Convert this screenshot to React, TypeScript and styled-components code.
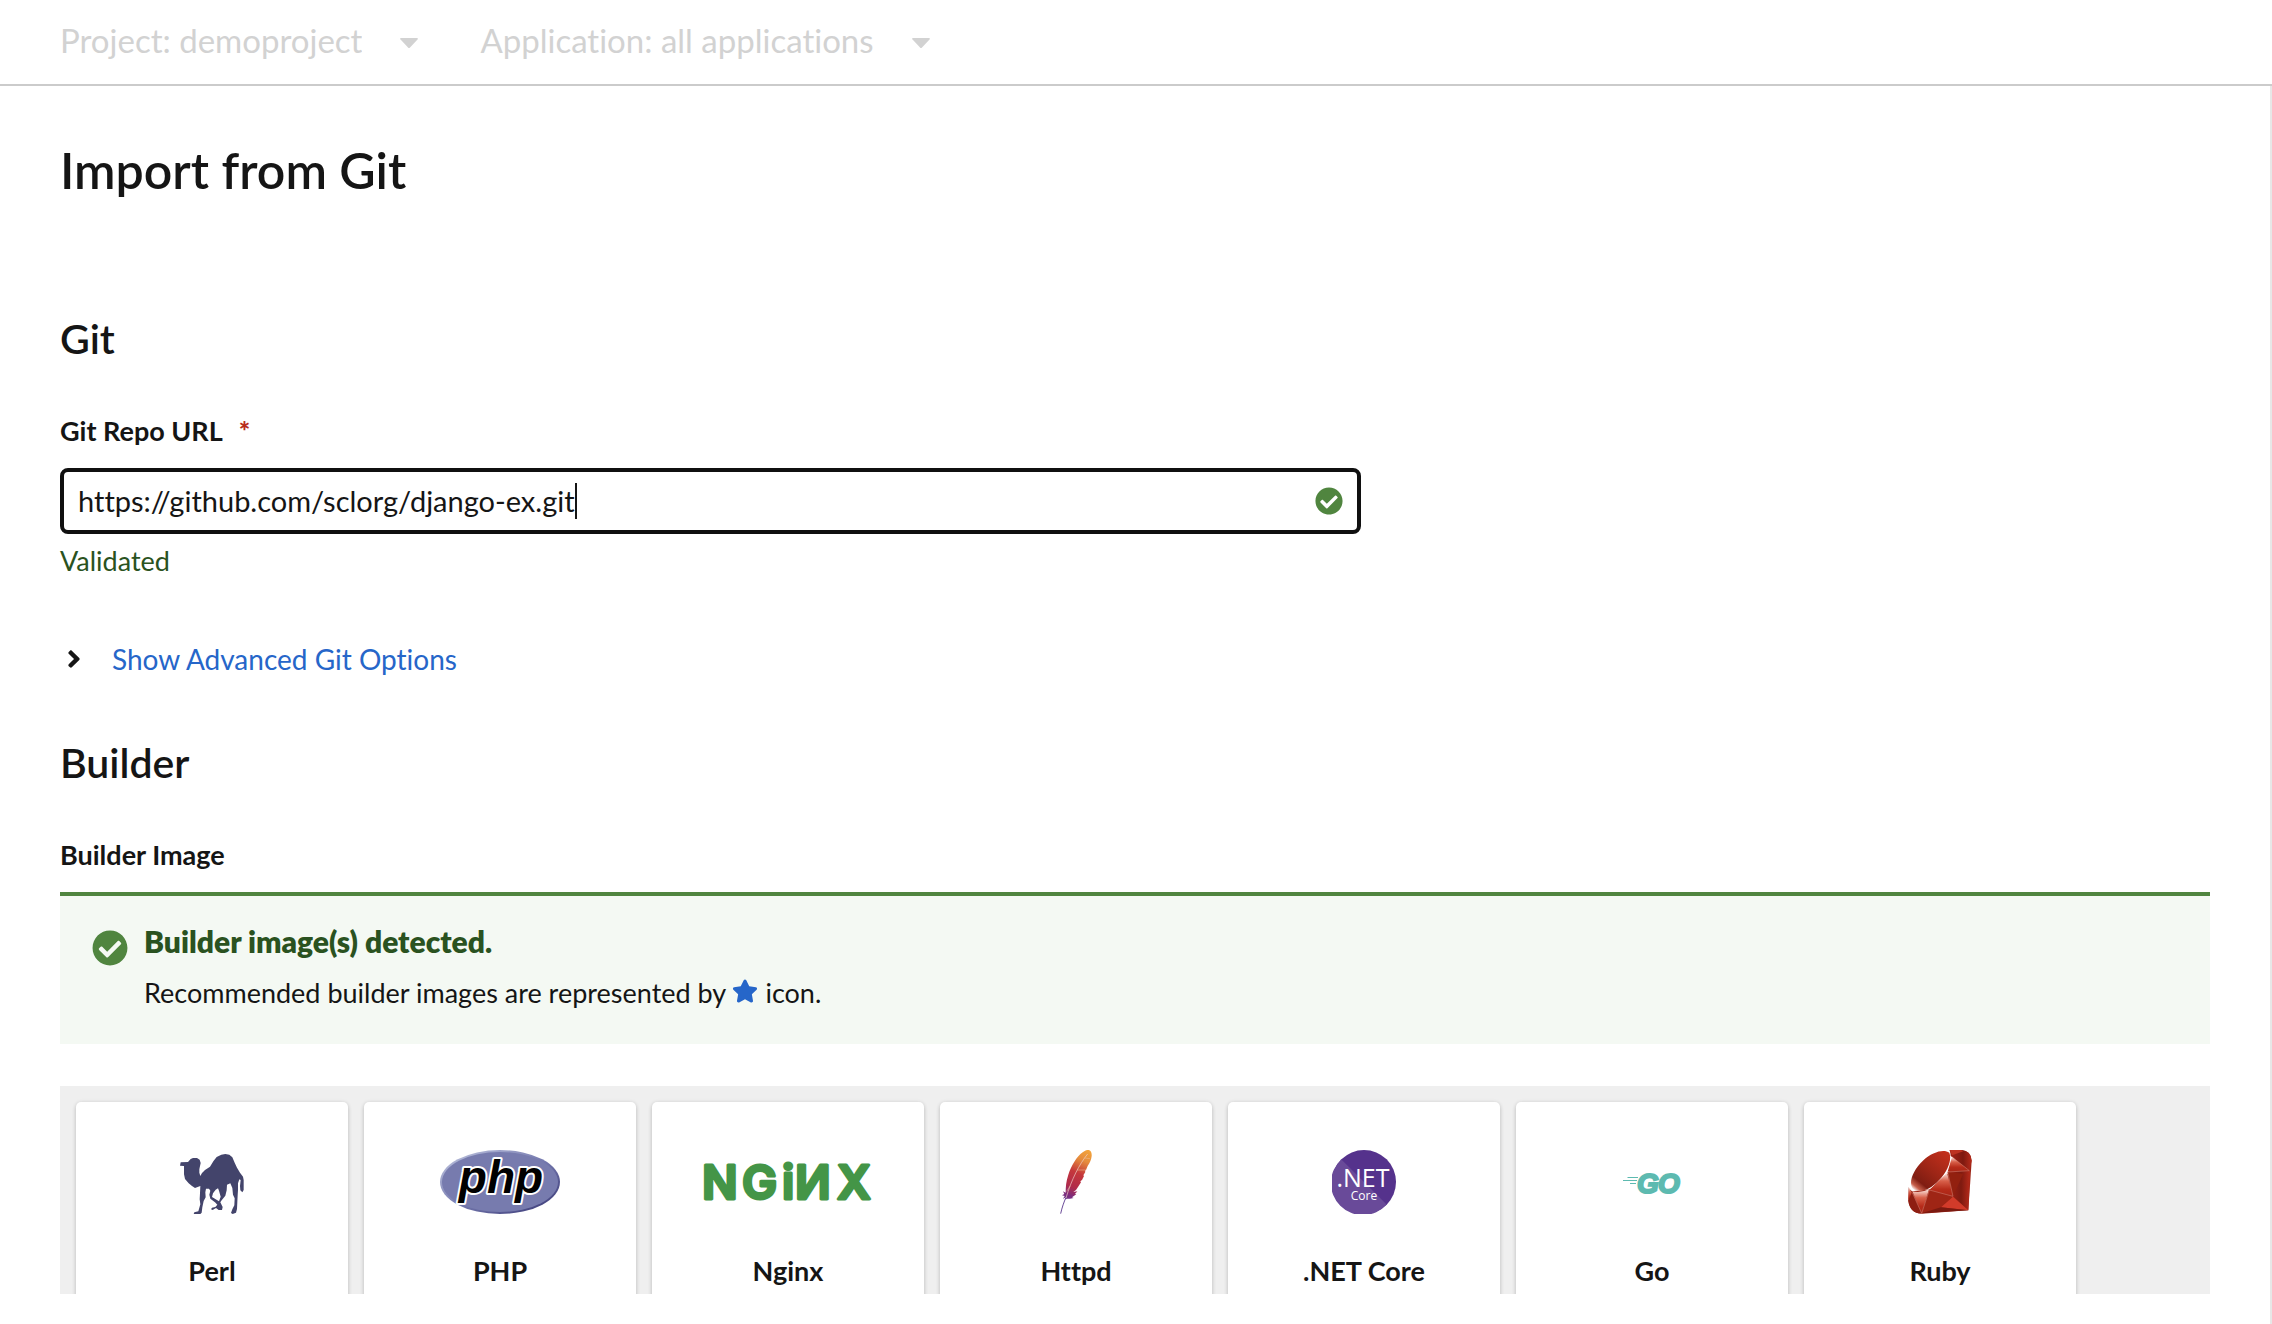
import React, { useState } from "react";
import styled, { createGlobalStyle, css } from "styled-components";
import { FaCheckCircle, FaAngleRight, FaStar } from "react-icons/fa";

const color = {
  text: "#151515",
  muted: "#d2d2d2",
  border: "#cbcbcb",
  success: "#50853f",
  successText: "#2a5220",
  successBg: "#f4f9f3",
  link: "#2666c9",
  danger: "#b92d1c",
  panel: "#efefef",
};

const GlobalStyle = createGlobalStyle`
  *, *::before, *::after { box-sizing: border-box; }
  body {
    margin: 0;
    background: #fff;
    color: ${color.text};
    font-family: Lato, "Open Sans", sans-serif;
    font-size: 28px;
    line-height: 36px;
  }
  body, button, input, select { font-variant-ligatures: none; }
`;

const Page = styled.div`
  display: flex;
  flex-direction: column;
  height: 100vh;
`;

const Toolbar = styled.header`
  display: flex;
  flex: none;
  align-items: center;
  gap: 62px;
  height: 86px;
  padding: 0 60px 4px;
  border-bottom: 2px solid ${color.border};
`;

const Dropdown = styled.label`
  display: flex;
  align-items: center;
  gap: 38px;
  color: ${color.muted};

  svg {
    width: 18px;
    height: 10px;
    margin-top: 6px;
  }
`;

const DropdownSelect = styled.select`
  appearance: none;
  field-sizing: content;
  padding: 0;
  border: 0;
  background: none;
  color: inherit;
  font: inherit;
  font-size: 33px;
  line-height: 40px;
  font-variant-ligatures: none;
  opacity: 1;
`;

const Content = styled.main`
  display: flex;
  flex: 1;
  flex-direction: column;
  min-height: 0;
  padding: 54px 60px 30px;
  border-right: 2px solid #e7e7e7;
  overflow: hidden;
`;

const Title = styled.h1`
  margin: 0 0 113px;
  font-size: 50px;
  font-weight: 600;
  line-height: 60px;
`;

const Section = styled.section<{ $fill?: boolean }>`
  display: flex;
  flex-direction: column;
  ${(p) =>
    p.$fill &&
    css`
      flex: 1;
      min-height: 0;
      margin-top: 58px;
    `}
`;

const SectionTitle = styled.h2`
  margin: 0 0 48px;
  font-size: 41px;
  font-weight: 600;
  line-height: 52px;
`;

const fieldLabel = css`
  margin: 0 0 19px;
  font-size: 27px;
  font-weight: 700;
  line-height: 36px;
`;

const FieldLabel = styled.label`
  ${fieldLabel}
`;

const GroupLabel = styled.h3`
  ${fieldLabel}
`;

const Required = styled.span`
  margin-left: 16px;
  color: ${color.danger};
  font-weight: 900;
`;

const InputBox = styled.div`
  display: flex;
  align-items: center;
  width: 60.5%;
  height: 66px;
  padding: 0 14px;
  border: 4px solid #101010;
  border-radius: 8px;

  svg {
    width: 28px;
    height: 28px;
    margin-left: auto;
    color: ${color.success};
  }
`;

const UrlInput = styled.input`
  field-sizing: content;
  max-width: 90%;
  padding: 0;
  border: 0;
  outline: 0;
  background: none;
  color: inherit;
  font: inherit;
  font-size: 29px;
  font-variant-ligatures: none;
`;

const TextCursor = styled.span`
  width: 2px;
  height: 36px;
  background: ${color.text};
`;

const HelperText = styled.p`
  margin: 9px 0 0;
  color: ${color.successText};
  font-size: 27px;
`;

const Expander = styled.button`
  display: flex;
  align-items: center;
  align-self: flex-start;
  gap: 28px;
  margin-top: 60px;
  padding: 0 0 0 4px;
  border: 0;
  background: none;
  color: ${color.link};
  font: inherit;
  font-variant-ligatures: none;
  line-height: 40px;
  cursor: pointer;

  svg {
    width: 20px;
    height: 28px;
    color: ${color.text};
  }
`;

const Alert = styled.div`
  display: flex;
  flex: none;
  gap: 16px;
  padding: 25px 32px 31px;
  border-top: 4px solid ${color.success};
  background: ${color.successBg};

  > svg {
    flex: none;
    width: 36px;
    height: 36px;
    margin-top: 9px;
    color: ${color.success};
  }
`;

const AlertBody = styled.div`
  display: flex;
  flex-direction: column;
  gap: 12px;
  line-height: 40px;
`;

const AlertTitle = styled.h4`
  margin: 0;
  color: ${color.successText};
  font-size: 30px;
  font-weight: 800;
`;

const AlertText = styled.p`
  margin: 0;
  font-size: 27px;

  svg {
    width: 26px;
    height: 24px;
    color: ${color.link};
  }
`;

const BuilderGrid = styled.div`
  display: grid;
  flex: 1;
  grid-template-columns: repeat(auto-fill, 272px);
  gap: 16px;
  min-height: 0;
  margin-top: 42px;
  padding: 16px;
  background: ${color.panel};
  overflow: hidden;
`;

const BuilderCard = styled.button`
  display: flex;
  flex-direction: column;
  align-items: center;
  gap: 39px;
  height: 240px;
  padding: 48px 16px;
  border: 0;
  border-radius: 5px;
  background: #fff;
  box-shadow: 0 2px 4px rgba(3, 3, 3, 0.16), 0 0 4px rgba(3, 3, 3, 0.08);
  color: inherit;
  font: inherit;
  font-size: 27px;
  font-weight: 700;
  font-variant-ligatures: none;
  cursor: pointer;
`;

function CaretIcon() {
  return (
    <svg viewBox="0 0 18 10" aria-hidden="true">
      <path fill="currentColor" d="M1 0H17Q18.500 0.300 17.500 1.500L10 9.500Q9 10.500 8 9.500L0.500 1.500Q-0.500 0.300 1 0Z" />
    </svg>
  );
}

function PerlIcon() {
  return (
    <svg width="64" height="64" viewBox="60 30 192 192" aria-hidden="true">
      <path
        fill="#43446b"
        fillRule="evenodd"
        d="M60 77 62 67 84 66 92 57 99 54 111 54 119 59 122 69 118 88 118 98 121 108 126 99 135 90 150 80 160 64 170 51 184 44 196 42 208 44 217 52 224 68 231 83 240 98 249 110 251 120 251 150 247 157 241 151 240 138 242 120 238 118 234 130 234 150 233 166 232 186 231 207 228 218 218 222 213 219 217 208 223 196 224 175 219 164 217 144 211 130 201 134 200 151 196 167 185 181 181 187 188 201 186 210 176 210 168 204 158 210 153 208 156 203 166 201 172 194 165 187 151 176 148 164 151 152 147 146 138 146 136 157 137 172 131 183 127 202 125 218 121 222 101 222 103 217 115 214 121 193 119 178 120 160 121 138 113 141 105 144 96 138 86 130 75 117 72 103 72 78ZM159 160 156 171 177 184 182 170 177 152 174 145 167 149Z"
      />
    </svg>
  );
}

function PhpIcon() {
  return (
    <svg width="120" height="64" viewBox="0 0 120 64" aria-hidden="true">
      <defs>
        <linearGradient id="phpRim" x1="0" y1="0" x2="1" y2="1">
          <stop offset="0.1" stopColor="#b4bad8" />
          <stop offset="0.5" stopColor="#777bb0" />
          <stop offset="0.9" stopColor="#42427e" />
        </linearGradient>
      </defs>
      <ellipse cx="60" cy="32" rx="60" ry="32" fill="url(#phpRim)" />
      <ellipse cx="60" cy="32" rx="58" ry="30" fill="#777bae" />
      <text
        x="61"
        y="43"
        textAnchor="middle"
        fontFamily="'Liberation Sans', sans-serif"
        fontSize="46"
        fontWeight="700"
        fontStyle="italic"
        fill="#000"
        stroke="#fff"
        strokeWidth="4"
        strokeLinejoin="round"
        paintOrder="stroke"
      >
        php
      </text>
    </svg>
  );
}

function NginxIcon() {
  return (
    <svg width="170" height="64" viewBox="0 0 170 64" aria-hidden="true">
      <text
        x="-1 39 79 92 134"
        y="49"
        fontFamily="Inter, sans-serif"
        fontSize="47"
        fontWeight="600"
        fill="#449547"
        stroke="#449547"
        strokeWidth="3"
        strokeLinejoin="round"
      >
        NGiИX
      </text>
    </svg>
  );
}

function HttpdIcon() {
  return (
    <svg width="32" height="64" viewBox="30 30 96 192" aria-hidden="true">
      <defs>
        <linearGradient id="feather" gradientUnits="userSpaceOnUse" x1="118" y1="34" x2="42" y2="200">
          <stop offset="0" stopColor="#f2a33c" />
          <stop offset="0.18" stopColor="#e58b3c" />
          <stop offset="0.4" stopColor="#c5383c" />
          <stop offset="0.65" stopColor="#b02b4b" />
          <stop offset="0.8" stopColor="#7b2c7e" />
          <stop offset="1" stopColor="#5c4390" />
        </linearGradient>
      </defs>
      <path
        fill="url(#feather)"
        d="M116 30 C122 31 126 38 125 48 C124 58 120 68 113 78 L108 90 105 92 106 96 100 106 102 108 96 120 91 124 93 127 86 138 78 150 70 156 82 154 75 162 79 163 66 172 71 174 60 176 50 176 46 179 48 172 39 176 44 168 36 166 43 162 39 154 47 158 C47 142 48 124 55 104 C64 78 80 49 98 37 C105 32 111 29 116 30Z"
      />
      <path fill="none" stroke="#6a4a98" strokeWidth="3" d="M48 172 C42 186 36 202 32 221" />
      <path fill="none" stroke="#efd0c8" strokeWidth="2" d="M113 42 C88 72 64 120 48 174" />
      <path fill="none" stroke="#f0c29a" strokeWidth="1.5" d="M104 54 120 56M82 90 108 90M60 138 50 154" />
    </svg>
  );
}

function DotNetIcon() {
  return (
    <svg width="64" height="64" viewBox="0 0 64 64" aria-hidden="true">
      <circle cx="32" cy="32" r="32" fill="#55328c" />
      <path fill="#694a99" d="M9.4 9.4 A32 32 0 1 0 54.6 54.6Z" />
      <g fill="#fff" fontFamily="'Open Sans', sans-serif" fontWeight="400" textAnchor="middle">
        <text x="31" y="37" fontSize="25">.NET</text>
        <text x="32" y="50" fontSize="12">Core</text>
      </g>
    </svg>
  );
}

function GoIcon() {
  return (
    <svg width="58" height="64" viewBox="0 0 58 64" aria-hidden="true">
      <path fill="none" stroke="#5dbab0" strokeWidth="1" d="M4.500 27.500H15M0 30.500H14M7 33.500H13" />
      <text
        x="14 35"
        y="43"
        fontFamily="'Liberation Sans', sans-serif"
        fontSize="28"
        fontWeight="700"
        fontStyle="italic"
        fill="#5dbab0"
        stroke="#5dbab0"
        strokeWidth="2"
      >
        GO
      </text>
    </svg>
  );
}

function RubyIcon() {
  return (
    <svg width="64" height="64" viewBox="84 60 192 192" aria-hidden="true">
      <defs>
        <linearGradient id="rubyTable" x1="0.9" y1="0" x2="0.1" y2="1">
          <stop offset="0" stopColor="#c4301c" />
          <stop offset="0.5" stopColor="#9c2516" />
          <stop offset="0.8" stopColor="#7f1d12" />
          <stop offset="0.92" stopColor="#c8604c" />
          <stop offset="1" stopColor="#fff" />
        </linearGradient>
        <linearGradient id="rubyFacet" x1="0" y1="0" x2="0" y2="1">
          <stop offset="0" stopColor="#fbe9e4" />
          <stop offset="0.35" stopColor="#d8604a" />
          <stop offset="0.7" stopColor="#b72c1a" />
          <stop offset="1" stopColor="#a82617" />
        </linearGradient>
        <linearGradient id="rubyEdge" x1="0" y1="0" x2="1" y2="0">
          <stop offset="0" stopColor="#a32315" />
          <stop offset="0.6" stopColor="#7e1a10" />
          <stop offset="1" stopColor="#b62a1a" />
        </linearGradient>
      </defs>
      <path fill="#9c2416" d="M200 60H244Q274 62 275 92L265 241 125 251Q90 250 85 212L86 172Z" />
      <path fill="#fff" d="M84 60H198L208 60 222 86 206 128 150 178 96 184 85 174Z" />
      <path fill="url(#rubyTable)" d="M208 68 C216 88 205 121 177 151 C151 180 118 190 100 178 C83 159 99 121 128 93 C158 65 191 57 208 68Z" />
      <path fill="url(#rubyEdge)" d="M210 60H244Q272 62 275 92L268 121 212 78Z" />
      <path fill="#bd3321" d="M210 60H244L250 64 216 76Z" />
      <path fill="url(#rubyFacet)" d="M216 80 267 122 203 125Z" />
      <path fill="url(#rubyEdge)" d="M203 126 270 123 265 241 219 199Z" />
      <path fill="#92200f" d="M203 126 250 131 219 199Z" />
      <path fill="url(#rubyFacet)" d="M201 128 219 199 149 180Z" />
      <path fill="url(#rubyFacet)" d="M97 184Q122 190 147 178L125 250Z" />
      <path fill="url(#rubyFacet)" d="M87 172 95 188 85 212Z" />
      <path fill="#8e1e12" d="M96 188 125 250Q90 250 85 212Z" />
      <path fill="#9f2515" d="M148 181 218 200 183 232 125 250Z" />
      <path fill="#d23b2a" d="M219 200 265 241 183 232Z" />
      <path fill="#7b1a10" d="M183 232 265 241 125 250Z" />
      <path fill="none" stroke="#d98a7c" strokeWidth="1.5" d="M97 188 125 250 148 180 219 199 203 126 268 122 215 80" />
    </svg>
  );
}

const builders = [
  { name: "Perl", Icon: PerlIcon },
  { name: "PHP", Icon: PhpIcon },
  { name: "Nginx", Icon: NginxIcon },
  { name: "Httpd", Icon: HttpdIcon },
  { name: ".NET Core", Icon: DotNetIcon },
  { name: "Go", Icon: GoIcon },
  { name: "Ruby", Icon: RubyIcon },
];

const filters = [
  { id: "project", value: "Project: demoproject" },
  { id: "application", value: "Application: all applications" },
];

export default function App() {
  const [url, setUrl] = useState("https://github.com/sclorg/django-ex.git");

  return (
    <Page>
      <GlobalStyle />
      <Toolbar>
        {filters.map((f) => (
          <Dropdown key={f.id} htmlFor={f.id}>
            <DropdownSelect id={f.id} aria-label={f.id} disabled>
              <option>{f.value}</option>
            </DropdownSelect>
            <CaretIcon />
          </Dropdown>
        ))}
      </Toolbar>
      <Content>
        <Title>Import from Git</Title>
        <Section>
          <SectionTitle>Git</SectionTitle>
          <FieldLabel htmlFor="repo-url">
            Git Repo URL<Required aria-hidden="true">*</Required>
          </FieldLabel>
          <InputBox>
            <UrlInput id="repo-url" type="text" required value={url} onChange={(e) => setUrl(e.target.value)} />
            <TextCursor />
            <FaCheckCircle aria-hidden="true" />
          </InputBox>
          <HelperText>Validated</HelperText>
          <Expander type="button" aria-expanded="false">
            <FaAngleRight aria-hidden="true" />
            Show Advanced Git Options
          </Expander>
        </Section>
        <Section $fill>
          <SectionTitle>Builder</SectionTitle>
          <GroupLabel>Builder Image</GroupLabel>
          <Alert>
            <FaCheckCircle aria-hidden="true" />
            <AlertBody>
              <AlertTitle>Builder image(s) detected.</AlertTitle>
              <AlertText>
                Recommended builder images are represented by <FaStar aria-hidden="true" /> icon.
              </AlertText>
            </AlertBody>
          </Alert>
          <BuilderGrid>
            {builders.map(({ name, Icon }) => (
              <BuilderCard key={name} type="button">
                <Icon />
                {name}
              </BuilderCard>
            ))}
          </BuilderGrid>
        </Section>
      </Content>
    </Page>
  );
}
